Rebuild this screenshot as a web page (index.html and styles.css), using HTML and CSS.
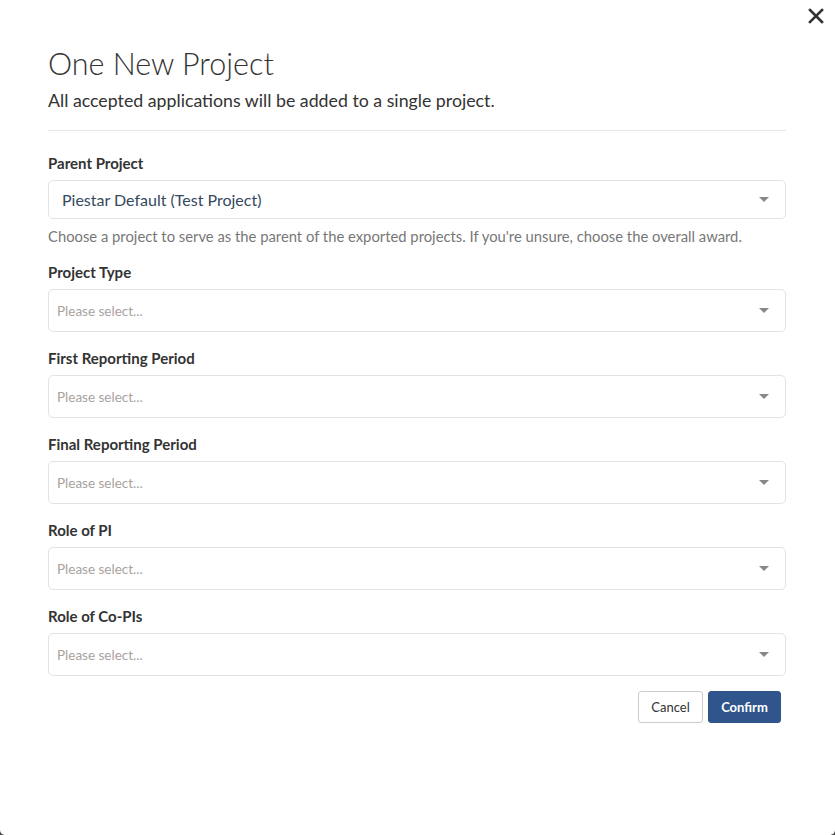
FILE: index.html
```html
<!DOCTYPE html>
<html lang="en">
<head>
<meta charset="utf-8">
<title>One New Project</title>
<link rel="stylesheet" href="styles.css">
</head>
<body>
<div class="modal">
  <button class="close" aria-label="Close">
    <svg width="16" height="16" viewBox="0 0 16 16"><path d="M2 2 L14 14 M14 2 L2 14" stroke="#333" stroke-width="2.6" stroke-linecap="square"/></svg>
  </button>
  <div class="content">
    <h1 class="title">One New Project</h1>
    <p class="subtitle">All accepted applications will be added to a single project.</p>
    <hr class="divider">

    <div class="field field-first">
      <label class="label">Parent Project</label>
      <div class="select select-filled"><span class="value">Piestar Default (Test Project)</span><span class="arrow"></span></div>
      <p class="help">Choose a project to serve as the parent of the exported projects. If you're unsure, choose the overall award.</p>
    </div>

    <div class="field">
      <label class="label">Project Type</label>
      <div class="select"><span class="placeholder">Please select...</span><span class="arrow"></span></div>
    </div>

    <div class="field">
      <label class="label">First Reporting Period</label>
      <div class="select"><span class="placeholder">Please select...</span><span class="arrow"></span></div>
    </div>

    <div class="field">
      <label class="label">Final Reporting Period</label>
      <div class="select"><span class="placeholder">Please select...</span><span class="arrow"></span></div>
    </div>

    <div class="field">
      <label class="label">Role of PI</label>
      <div class="select"><span class="placeholder">Please select...</span><span class="arrow"></span></div>
    </div>

    <div class="field">
      <label class="label">Role of Co-PIs</label>
      <div class="select"><span class="placeholder">Please select...</span><span class="arrow"></span></div>
    </div>

    <div class="actions">
      <button class="btn btn-cancel">Cancel</button>
      <button class="btn btn-confirm">Confirm</button>
    </div>
  </div>
</div>
</body>
</html>
```

FILE: styles.css
```css
* { box-sizing: border-box; }
html, body { margin: 0; padding: 0; }
body {
  background: #4a4a4a;
  font-family: Lato, "Open Sans", sans-serif;
  color: #333;
  width: 835px;
  height: 835px;
  overflow: hidden;
}
.modal {
  position: relative;
  background: #fff;
  width: 835px;
  height: 835px;
  border-radius: 0 0 5px 5px;
}
.close {
  position: absolute;
  top: 8px;
  right: 11px;
  width: 16px;
  height: 16px;
  padding: 0;
  border: 0;
  background: none;
}
.close svg { display: block; }
.content {
  padding: 45px 49px 0 48px;
}
.title {
  margin: 0;
  font-size: 30.5px;
  font-weight: 300;
  line-height: 36px;
  color: #333;
}
.subtitle {
  margin: 6px 0 0;
  font-size: 17.75px;
  line-height: 27px;
  color: #333;
}
.divider {
  margin: 16px 0 22px;
  border: 0;
  border-top: 1px solid #e8e8e8;
  height: 0;
}
.field {
  margin-bottom: 16px;
}
.field-first { margin-bottom: 15px; }
.label {
  display: block;
  font-size: 15px;
  font-weight: 700;
  line-height: 21px;
  color: #333;
  margin-bottom: 6px;
}
.select {
  display: flex;
  align-items: center;
  height: 43px;
  border: 1px solid #e3e3e3;
  border-radius: 5px;
  padding: 0 16px 0 8px;
  background: #fff;
}
.select-filled {
  height: 39px;
  padding-left: 13px;
}
.value {
  flex: 1;
  font-size: 16px;
  color: #35495e;
}
.placeholder {
  flex: 1;
  font-size: 13.5px;
  color: #a8a29e;
}
.arrow {
  width: 0;
  height: 0;
  border-left: 5px solid transparent;
  border-right: 5px solid transparent;
  border-top: 5px solid #888;
}
.help {
  margin: 7px 0 0;
  font-size: 14.8px;
  line-height: 21px;
  color: #777;
}
.actions {
  display: flex;
  justify-content: flex-end;
  gap: 5px;
  padding-right: 5px;
  margin-top: -1px;
}
.btn {
  height: 32px;
  font-family: Lato, "Open Sans", sans-serif;
  font-size: 13px;
  border-radius: 3px;
  padding: 0 12px;
  cursor: pointer;
}
.btn-cancel {
  background: #fff;
  border: 1px solid #ccc;
  color: #333;
  width: 65px;
}
.btn-confirm {
  background: #30548c;
  border: 1px solid #30548c;
  color: #fff;
  font-weight: 700;
  width: 73px;
}
```
